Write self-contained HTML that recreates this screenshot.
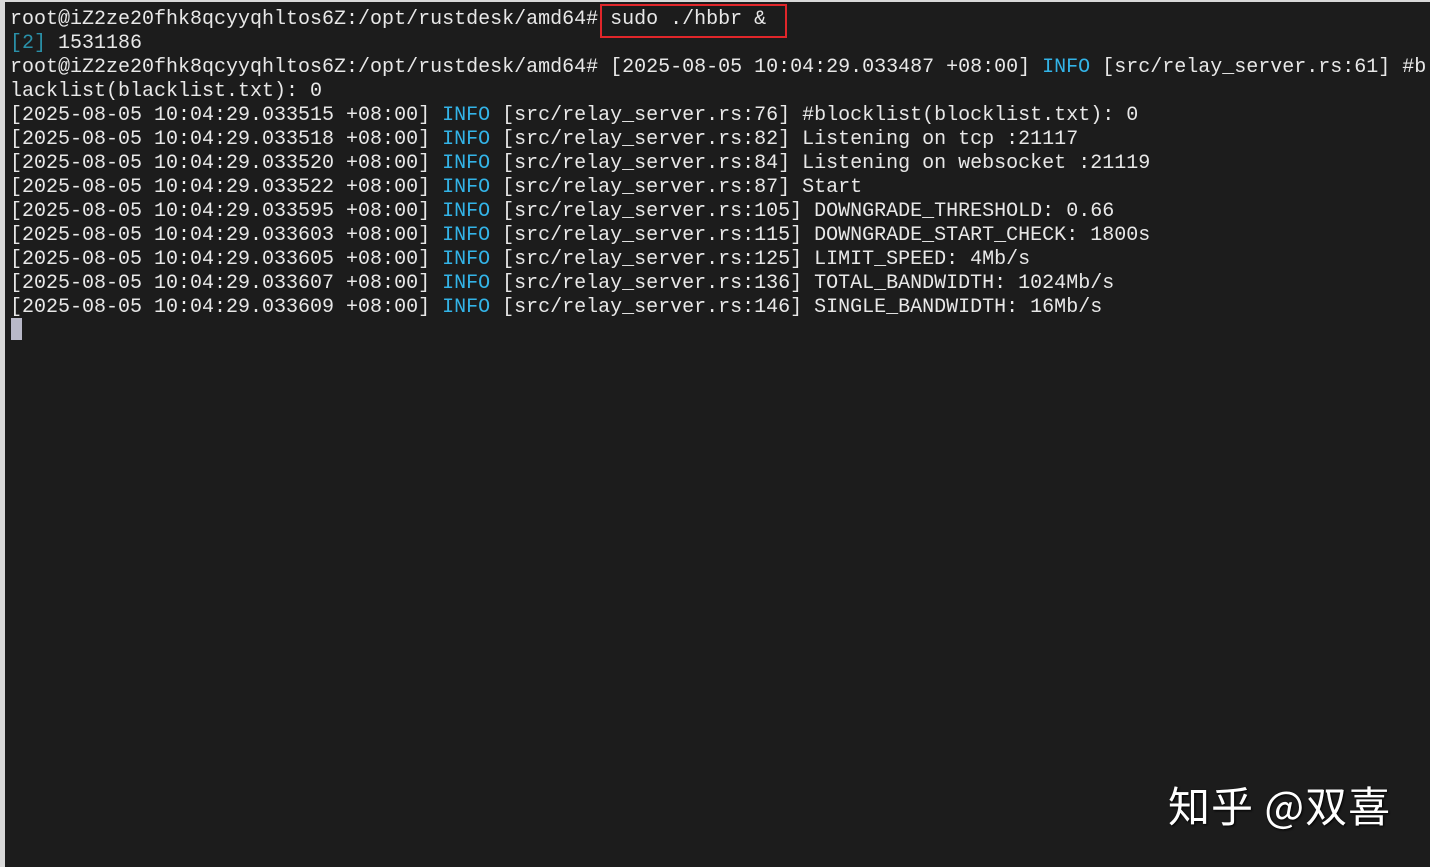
<!DOCTYPE html>
<html><head><meta charset="utf-8"><style>
html,body{margin:0;padding:0;}
body{width:1430px;height:867px;background:#d9d9d9;position:relative;overflow:hidden;}
#t{position:absolute;left:5px;top:2px;right:0;bottom:0;background:#1c1c1c;}
pre{margin:0;position:absolute;left:10px;top:8px;font-family:"Liberation Mono",monospace;font-size:20px;line-height:24px;color:#e8e8e8;white-space:pre;}
.c{color:#33b4e8}.d{color:#2a90a8}
#box{position:absolute;left:600px;top:4px;width:183px;height:30px;border:2px solid #e0262a;}
#cur{position:absolute;left:11px;top:318px;width:11px;height:22px;background:#b8b8c8;}
#wm{position:absolute;left:1168px;top:779px;font-family:"Noto Sans CJK SC",sans-serif;font-size:42px;line-height:52px;letter-spacing:1px;color:#fff;text-shadow:1px 1px 2px #000;}
</style></head><body>
<div id="t"></div>
<pre>root@iZ2ze20fhk8qcyyqhltos6Z:/opt/rustdesk/amd64# sudo ./hbbr &amp;
<span class="d">[2]</span> 1531186
root@iZ2ze20fhk8qcyyqhltos6Z:/opt/rustdesk/amd64# [2025-08-05 10:04:29.033487 +08:00] <span class="c">INFO</span> [src/relay_server.rs:61] #b
lacklist(blacklist.txt): 0
[2025-08-05 10:04:29.033515 +08:00] <span class="c">INFO</span> [src/relay_server.rs:76] #blocklist(blocklist.txt): 0
[2025-08-05 10:04:29.033518 +08:00] <span class="c">INFO</span> [src/relay_server.rs:82] Listening on tcp :21117
[2025-08-05 10:04:29.033520 +08:00] <span class="c">INFO</span> [src/relay_server.rs:84] Listening on websocket :21119
[2025-08-05 10:04:29.033522 +08:00] <span class="c">INFO</span> [src/relay_server.rs:87] Start
[2025-08-05 10:04:29.033595 +08:00] <span class="c">INFO</span> [src/relay_server.rs:105] DOWNGRADE_THRESHOLD: 0.66
[2025-08-05 10:04:29.033603 +08:00] <span class="c">INFO</span> [src/relay_server.rs:115] DOWNGRADE_START_CHECK: 1800s
[2025-08-05 10:04:29.033605 +08:00] <span class="c">INFO</span> [src/relay_server.rs:125] LIMIT_SPEED: 4Mb/s
[2025-08-05 10:04:29.033607 +08:00] <span class="c">INFO</span> [src/relay_server.rs:136] TOTAL_BANDWIDTH: 1024Mb/s
[2025-08-05 10:04:29.033609 +08:00] <span class="c">INFO</span> [src/relay_server.rs:146] SINGLE_BANDWIDTH: 16Mb/s</pre>
<div id="box"></div>
<div id="cur"></div>
<div id="wm">知乎 @双喜</div>
</body></html>
